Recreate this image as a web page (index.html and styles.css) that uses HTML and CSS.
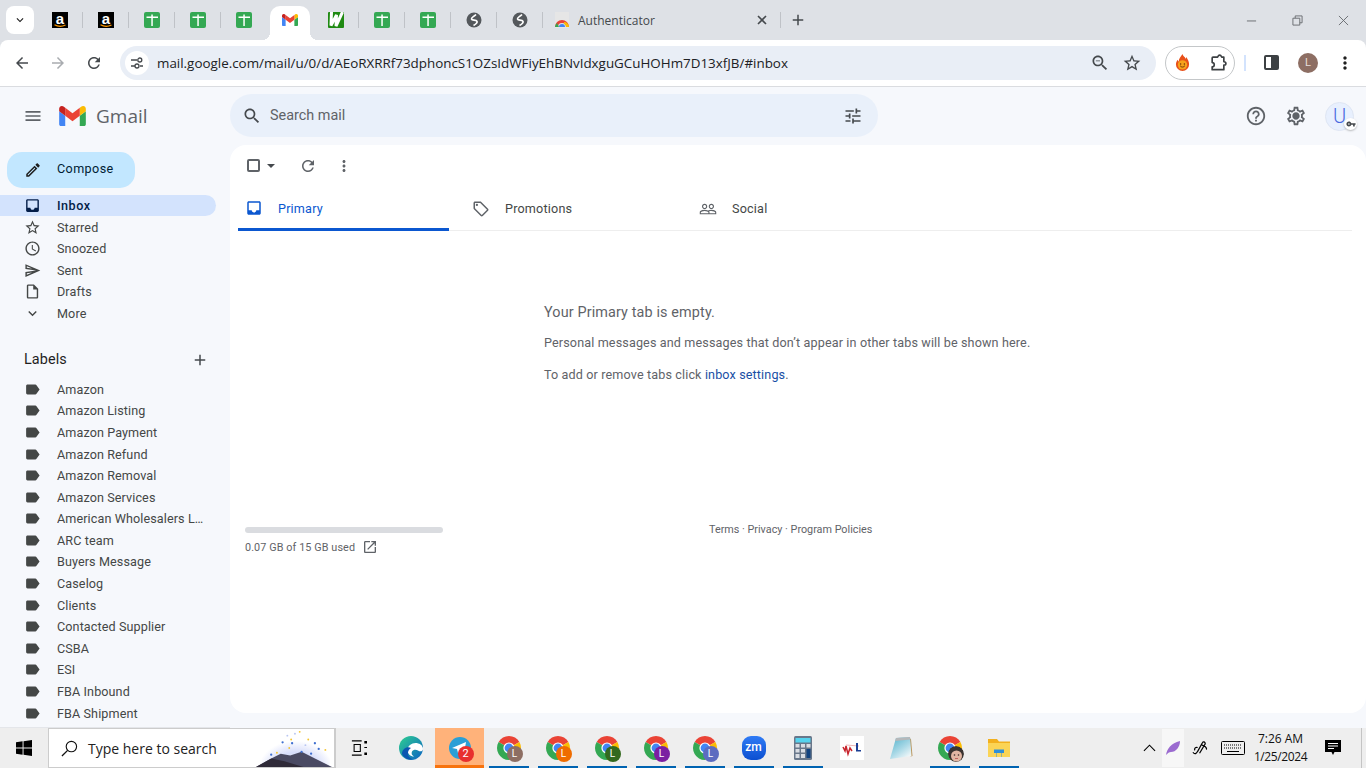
FILE: index.html
```html
<!DOCTYPE html>
<html lang="en">
<head>
    <meta charset="UTF-8">
    <title>Inbox - Gmail</title>
    <link rel="stylesheet" href="styles.css">
</head>
<body>
    <svg class="sprite" xmlns="http://www.w3.org/2000/svg">
        <symbol id="i-menu" viewBox="0 0 24 24"><path d="M3 18h18v-2H3v2zm0-5h18v-2H3v2zm0-7v2h18V6H3z"/></symbol>
        <symbol id="i-search" viewBox="0 0 24 24"><path d="M15.5 14h-.79l-.28-.27C15.41 12.59 16 11.11 16 9.5 16 5.91 13.09 3 9.5 3S3 5.91 3 9.5 5.91 16 9.5 16c1.61 0 3.09-.59 4.23-1.57l.27.28v.79l5 4.99L20.49 19l-4.99-5zm-6 0C7.01 14 5 11.99 5 9.5S7.01 5 9.5 5 14 7.01 14 9.5 11.99 14 9.5 14z"/></symbol>
        <symbol id="i-zoom" viewBox="0 0 24 24"><path d="M15.5 14h-.79l-.28-.27C15.41 12.59 16 11.11 16 9.5 16 5.91 13.09 3 9.5 3S3 5.91 3 9.5 5.91 16 9.5 16c1.61 0 3.09-.59 4.23-1.57l.27.28v.79l5 4.99L20.49 19l-4.99-5zm-6 0C7.01 14 5 11.99 5 9.5S7.01 5 9.5 5 14 7.01 14 9.5 11.99 14 9.5 14zM7 9h5v1H7z"/></symbol>
        <symbol id="i-tune" viewBox="0 0 24 24"><path d="M3 17v2h6v-2H3zM3 5v2h10V5H3zm10 16v-2h8v-2h-8v-2h-2v6h2zM7 9v2H3v2h4v2h2V9H7zm14 4v-2H11v2h10zm-6-4h2V7h4V5h-4V3h-2v6z"/></symbol>
        <symbol id="i-help" viewBox="0 0 24 24"><path d="M11 18h2v-2h-2v2zm1-16C6.48 2 2 6.48 2 12s4.48 10 10 10 10-4.48 10-10S17.52 2 12 2zm0 18c-4.41 0-8-3.59-8-8s3.59-8 8-8 8 3.59 8 8-3.59 8-8 8zm0-14c-2.21 0-4 1.79-4 4h2c0-1.1.9-2 2-2s2 .9 2 2c0 2-3 1.75-3 5h2c0-2.25 3-2.5 3-5 0-2.21-1.79-4-4-4z"/></symbol>
        <symbol id="i-gear" viewBox="0 0 24 24"><path d="M19.43 12.98c.04-.32.07-.64.07-.98 0-.34-.03-.66-.07-.98l2.11-1.65c.19-.15.24-.42.12-.64l-2-3.46c-.09-.16-.26-.25-.44-.25-.06 0-.12.01-.17.03l-2.49 1c-.52-.4-1.08-.73-1.69-.98l-.38-2.65C14.46 2.18 14.25 2 14 2h-4c-.25 0-.46.18-.49.42l-.38 2.65c-.61.25-1.17.59-1.69.98l-2.49-1c-.06-.02-.12-.03-.18-.03-.17 0-.34.09-.43.25l-2 3.46c-.13.22-.07.49.12.64l2.11 1.65c-.04.32-.07.65-.07.98 0 .33.03.66.07.98l-2.11 1.65c-.19.15-.24.42-.12.64l2 3.46c.09.16.26.25.44.25.06 0 .12-.01.17-.03l2.49-1c.52.4 1.08.73 1.69.98l.38 2.65c.03.24.24.42.49.42h4c.25 0 .46-.18.49-.42l.38-2.65c.61-.25 1.17-.59 1.69-.98l2.49 1c.06.02.12.03.18.03.17 0 .34-.09.43-.25l2-3.46c.12-.22.07-.49-.12-.64l-2.11-1.65zm-1.98-1.71c.04.31.05.52.05.73 0 .21-.02.43-.05.73l-.14 1.13.89.7 1.08.84-.7 1.21-1.27-.51-1.04-.42-.9.68c-.43.32-.84.56-1.25.73l-1.06.43-.16 1.13-.2 1.35h-1.4l-.19-1.35-.16-1.13-1.06-.43c-.43-.18-.83-.41-1.23-.71l-.91-.7-1.06.43-1.27.51-.7-1.21 1.08-.84.89-.7-.14-1.13c-.03-.31-.05-.54-.05-.74s.02-.43.05-.73l.14-1.13-.89-.7-1.08-.84.7-1.21 1.27.51 1.04.42.9-.68c.43-.32.84-.56 1.25-.73l1.06-.43.16-1.13.2-1.35h1.39l.19 1.35.16 1.13 1.06.43c.43.18.83.41 1.23.71l.91.7 1.06-.43 1.27-.51.7 1.21-1.07.85-.89.7.14 1.13zM12 8c-2.21 0-4 1.79-4 4s1.79 4 4 4 4-1.79 4-4-1.79-4-4-4z"/></symbol>
        <symbol id="i-edit" viewBox="0 0 24 24"><path d="M14.06 9.02l.92.92L5.92 19H5v-.92l9.06-9.06M17.66 3c-.25 0-.51.1-.7.29l-1.83 1.83 3.75 3.75 1.83-1.83c.39-.39.39-1.02 0-1.41l-2.34-2.34c-.2-.2-.45-.29-.71-.29zm-3.6 3.19L3 17.25V21h3.75L17.81 9.94l-3.75-3.75z"/></symbol>
        <symbol id="i-inbox" viewBox="0 0 24 24"><path d="M19 3H4.99c-1.11 0-1.98.89-1.98 2L3 19c0 1.1.88 2 1.99 2H19c1.1 0 2-.9 2-2V5c0-1.11-.9-2-2-2zm0 12h-4c0 1.66-1.35 3-3 3s-3-1.34-3-3H4.99V5H19v10z" fill-rule="evenodd"/></symbol>
        <symbol id="i-star" viewBox="0 0 24 24"><path d="M22 9.24l-7.19-.62L12 2 9.19 8.63 2 9.24l5.46 4.73L5.82 21 12 17.27 18.18 21l-1.63-7.03L22 9.24zM12 15.4l-3.76 2.27 1-4.28-3.32-2.88 4.38-.38L12 6.1l1.71 4.04 4.38.38-3.32 2.88 1 4.28L12 15.4z"/></symbol>
        <symbol id="i-clock" viewBox="0 0 24 24"><path d="M11.99 2C6.47 2 2 6.48 2 12s4.47 10 9.99 10C17.52 22 22 17.52 22 12S17.52 2 11.99 2zM12 20c-4.42 0-8-3.58-8-8s3.58-8 8-8 8 3.58 8 8-3.58 8-8 8zm.5-13H11v6l5.25 3.15.75-1.23-4.5-2.67z"/></symbol>
        <symbol id="i-send" viewBox="0 0 24 24"><path d="M4.01 6.03l7.51 3.22-7.52-1 .01-2.22m7.5 8.72L4 17.97v-2.22l7.51-1M2.01 3L2 10l15 2-15 2 .01 7L23 12 2.01 3z"/></symbol>
        <symbol id="i-draft" viewBox="0 0 24 24"><path d="M14 2H6c-1.1 0-1.99.9-1.99 2L4 20c0 1.1.89 2 1.99 2H18c1.1 0 2-.9 2-2V8l-6-6zM6 20V4h7v5h5v11H6z"/></symbol>
        <symbol id="i-more" viewBox="0 0 24 24"><path d="M16.59 8.59L12 13.17 7.41 8.59 6 10l6 6 6-6z"/></symbol>
        <symbol id="i-add" viewBox="0 0 24 24"><path d="M19 13h-6v6h-2v-6H5v-2h6V5h2v6h6v2z"/></symbol>
        <symbol id="i-label" viewBox="0 0 24 24"><path d="M17.63 5.84C17.27 5.33 16.67 5 16 5L5 5.01C3.9 5.01 3 5.9 3 7v10c0 1.1.9 1.99 2 1.99L16 19c.67 0 1.27-.33 1.63-.84L22 12l-4.37-6.16z"/></symbol>
        <symbol id="i-refresh" viewBox="0 0 24 24"><path d="M17.65 6.35C16.2 4.9 14.21 4 12 4c-4.42 0-7.99 3.58-7.99 8s3.57 8 7.99 8c3.73 0 6.84-2.55 7.73-6h-2.08c-.82 2.33-3.04 4-5.65 4-3.31 0-6-2.69-6-6s2.69-6 6-6c1.66 0 3.14.69 4.22 1.78L13 11h7V4l-2.35 2.35z"/></symbol>
        <symbol id="i-dots" viewBox="0 0 24 24"><path d="M12 8c1.1 0 2-.9 2-2s-.9-2-2-2-2 .9-2 2 .9 2 2 2zm0 2c-1.1 0-2 .9-2 2s.9 2 2 2 2-.9 2-2-.9-2-2-2zm0 6c-1.1 0-2 .9-2 2s.9 2 2 2 2-.9 2-2-.9-2-2-2z"/></symbol>
        <symbol id="i-tag" viewBox="0 0 24 24"><path d="M21.41 11.58l-9-9C12.05 2.22 11.55 2 11 2H4c-1.1 0-2 .9-2 2v7c0 .55.22 1.05.59 1.42l9 9c.36.36.86.58 1.41.58s1.05-.22 1.41-.59l7-7c.37-.36.59-.86.59-1.41s-.23-1.06-.59-1.42zM13 20.01L4 11V4h7v-.01l9 8.99-7 7.03z"/><circle cx="6.5" cy="6.5" r="1.5"/></symbol>
        <symbol id="i-people" viewBox="0 0 24 24"><path d="M16.5 13c-1.2 0-3.07.34-4.5 1-1.43-.67-3.3-1-4.5-1C5.33 13 1 14.08 1 16.25V19h22v-2.75c0-2.17-4.33-3.25-6.5-3.25zm-4 4.5h-10v-1.25c0-.54 2.56-1.75 5-1.75s5 1.21 5 1.75v1.25zm9 0H14v-1.25c0-.46-.2-.86-.52-1.22.88-.3 1.96-.53 3.02-.53 2.44 0 5 1.21 5 1.75v1.25zM7.5 12c1.93 0 3.5-1.57 3.5-3.5S9.43 5 7.5 5 4 6.57 4 8.5 5.57 12 7.5 12zm0-5.5c1.1 0 2 .9 2 2s-.9 2-2 2-2-.9-2-2 .9-2 2-2zm9 5.5c1.93 0 3.5-1.57 3.5-3.5S18.43 5 16.5 5 13 6.57 13 8.5s1.57 3.5 3.5 3.5zm0-5.5c1.1 0 2 .9 2 2s-.9 2-2 2-2-.9-2-2 .9-2 2-2z"/></symbol>
        <symbol id="i-open" viewBox="0 0 24 24"><path d="M19 19H5V5h7V3H5c-1.11 0-2 .9-2 2v14c0 1.1.89 2 2 2h14c1.1 0 2-.9 2-2v-7h-2v7zM14 3v2h3.59l-9.83 9.83 1.41 1.41L19 6.41V10h2V3h-7z"/></symbol>
        <symbol id="i-back" viewBox="0 0 24 24"><path d="M20 11H7.83l5.59-5.59L12 4l-8 8 8 8 1.41-1.41L7.83 13H20v-2z"/></symbol>
        <symbol id="i-forward" viewBox="0 0 24 24"><path d="M12 4l-1.41 1.41L16.17 11H4v2h12.17l-5.58 5.59L12 20l8-8z"/></symbol>
        <symbol id="i-key" viewBox="0 0 24 24"><path d="M12.65 10C11.83 7.67 9.61 6 7 6c-3.31 0-6 2.69-6 6s2.69 6 6 6c2.61 0 4.83-1.67 5.65-4H17v4h4v-4h2v-4H12.65zM7 14c-1.1 0-2-.9-2-2s.9-2 2-2 2 .9 2 2-.9 2-2 2z"/></symbol>
        <symbol id="i-globe" viewBox="0 0 16 16"><circle cx="8" cy="8" r="7.5" fill="#54585c"/><path d="M10 2.500C8 4.500 5 5.500 5.500 7c.6 1.800 4.500.4 5.500 2.300.7 1.600-1 2.700-3.500 4.200" fill="none" stroke="#fff" stroke-width="1.700"/></symbol>
        <symbol id="i-amazon" viewBox="0 0 16 16"><rect width="16" height="16" fill="#000"/><text x="8" y="11.500" font-family="Liberation Sans, sans-serif" font-weight="700" font-size="15" fill="#fff" text-anchor="middle">a</text><path d="M2.500 12.800c3.400 1.900 7.600 1.900 11 .2" fill="none" stroke="#f90" stroke-width="1.200"/></symbol>
        <symbol id="i-sheet" viewBox="0 0 16 16"><rect width="16" height="16" rx="2" fill="#34a853"/><path d="M7.300 2.500h1.500V4.600H14V6.100H8.800V14H7.300V6.100H2.500V4.600H7.300z" fill="#fff"/></symbol>
        <symbol id="i-gmail" viewBox="52 42 88 66">
            <path fill="#4285f4" d="M58 108h14V74L52 59v43c0 3.32 2.69 6 6 6"/>
            <path fill="#34a853" d="M120 108h14c3.32 0 6-2.69 6-6V59l-20 15"/>
            <path fill="#fbbc04" d="M120 48v26l20-15v-8c0-7.42-8.47-11.65-14.4-7.2"/>
            <path fill="#ea4335" d="M72 74V48l24 18 24-18v26L96 92"/>
            <path fill="#c5221f" d="M52 51v8l20 15V48l-5.6-4.2c-5.94-4.45-14.4-.22-14.4 7.2"/>
        </symbol>
        <symbol id="i-chrome" viewBox="0 0 24 24">
            <path fill="#ea4335" d="M12 12L1.61 6A12 12 0 0 1 22.39 6Z"/>
            <path fill="#fbbc04" d="M12 12L22.39 6A12 12 0 0 1 12 24Z"/>
            <path fill="#34a853" d="M12 12L12 24A12 12 0 0 1 1.61 6Z"/>
            <circle cx="12" cy="12" r="5.6" fill="#fff"/>
            <circle cx="12" cy="12" r="4.4" fill="#4285f4"/>
        </symbol>
    </svg>

    <div class="tabstrip">
        <button class="tab-search"><svg class="icon ic-14 black"><use href="#i-more"/></svg></button>
        <div class="tab"><svg class="favicon"><use href="#i-amazon"/></svg></div>
        <div class="tab"><svg class="favicon"><use href="#i-amazon"/></svg></div>
        <div class="tab"><svg class="favicon"><use href="#i-sheet"/></svg></div>
        <div class="tab"><svg class="favicon"><use href="#i-sheet"/></svg></div>
        <div class="tab no-sep"><svg class="favicon"><use href="#i-sheet"/></svg></div>
        <div class="tab active no-sep"><svg class="favicon-gmail"><use href="#i-gmail"/></svg></div>
        <div class="tab">
            <svg class="favicon" viewBox="0 0 16 16">
                <rect width="16" height="16" rx="1" fill="#1f8a12"/>
                <path d="M3.500 0L3 13.500 8.500 3l-.5 11L14.500 0" fill="none" stroke="#fff" stroke-width="3"/>
            </svg>
        </div>
        <div class="tab"><svg class="favicon"><use href="#i-sheet"/></svg></div>
        <div class="tab"><svg class="favicon"><use href="#i-sheet"/></svg></div>
        <div class="tab"><svg class="favicon"><use href="#i-globe"/></svg></div>
        <div class="tab"><svg class="favicon"><use href="#i-globe"/></svg></div>
        <div class="tab tab-wide">
            <svg class="favicon" viewBox="0 0 16 16">
                <rect x="1" y="0" width="14" height="16" fill="#e6e6e6"/>
                <path d="M1 15a7 7 0 0 1 14 0h-3a4 4 0 0 0-8 0z" fill="#ea4335"/>
                <path d="M10 10a5 5 0 0 1 5 5h-3a3 3 0 0 0-2-3z" fill="#fbbc04"/>
                <path d="M1 15a7 7 0 0 1 2-4l2 4z" fill="#34a853"/>
                <path d="M5 15a3 3 0 0 1 6 0z" fill="#4285f4"/>
            </svg>
            <span class="tab-title">Authenticator</span>
            <svg class="icon ic-16 dark tab-close" viewBox="0 0 16 16"><path d="M4 4l8 8M12 4l-8 8" stroke="#45494d" stroke-width="1.6" fill="none"/></svg>
        </div>
        <svg class="icon ic-18 dark new-tab"><use href="#i-add"/></svg>
        <div class="window-controls">
            <span class="win-btn"><svg class="win-glyph" viewBox="0 0 12 12"><path d="M1 6.500h10"/></svg></span>
            <span class="win-btn"><svg class="win-glyph" viewBox="0 0 12 12"><path d="M1 3.500h7.500v7.500H1zM3.500 3.500V1H11v7.500H8.500"/></svg></span>
            <span class="win-btn"><svg class="win-glyph" viewBox="0 0 12 12"><path d="M1 1l10 10M11 1L1 11"/></svg></span>
        </div>
    </div>

    <div class="toolbar">
        <svg class="icon ic-18 dark nav-btn"><use href="#i-back"/></svg>
        <svg class="icon ic-18 faded nav-btn"><use href="#i-forward"/></svg>
        <svg class="icon ic-18 dark nav-btn"><use href="#i-refresh"/></svg>
        <div class="omnibox">
            <span class="site-info">
                <svg class="icon ic-14" viewBox="0 0 14 14"><path d="M1 4h6M10 10h3M1 10h4" stroke="#45494d" stroke-width="1.300" fill="none"/><circle cx="9.800" cy="4" r="2" fill="none" stroke="#45494d" stroke-width="1.300"/><circle cx="7" cy="10" r="2" fill="none" stroke="#45494d" stroke-width="1.300"/></svg>
            </span>
            <span class="url">mail.google.com/mail/u/0/d/AEoRXRRf73dphoncS1OZsIdWFiyEhBNvIdxguGCuHOHm7D13xfJB/#inbox</span>
            <svg class="icon ic-20 dark"><use href="#i-zoom"/></svg>
            <svg class="icon ic-20 dark"><use href="#i-star"/></svg>
        </div>
        <div class="ext-pill">
            <svg class="ext-fire" viewBox="0 0 16 18">
                <path d="M8 0c1 3 3 3 3 5 1-1 1-2 1-2 2 3 3 5 3 8a7 7 0 0 1-14 0c0-2 1-4 2-5 0 1 1 2 1 2 0-3 2-5 4-8z" fill="#e8501a"/>
                <circle cx="8" cy="11.500" r="5" fill="#f7a21b"/>
                <path d="M5.500 12.500c1 1.800 4 1.800 5 0" stroke="#6b3208" fill="none"/>
                <circle cx="6" cy="10.500" r=".8" fill="#6b3208"/><circle cx="10" cy="10.500" r=".8" fill="#6b3208"/>
            </svg>
            <svg class="ext-puzzle" viewBox="0 0 24 24"><path d="M6 5h5.500c.5-1 .8-2.500 2.500-2.500S16 4 16.500 5H19v5.500c1.500 0 2.500 .8 2.500 2s-1 2-2.500 2V20H5v-3.500c1.500 0 2.500-.6 2.500-2.500S6.500 11.500 5 11.500V6a1 1 0 0 1 1-1z" fill="none" stroke="#3c4043" stroke-width="2" stroke-linejoin="round"/></svg>
        </div>
        <span class="toolbar-sep"></span>
        <span class="side-panel"><span class="side-panel-fill"></span></span>
        <span class="profile-dot">L</span>
        <svg class="icon ic-20 black"><use href="#i-dots"/></svg>
    </div>

    <div class="gmail">
        <header class="gmail-header">
            <div class="brand">
                <svg class="icon ic-20 grey brand-menu"><use href="#i-menu"/></svg>
                <svg class="gmail-logo"><use href="#i-gmail"/></svg>
                <span class="gmail-word">Gmail</span>
            </div>
            <div class="search-bar">
                <svg class="icon ic-20 dark"><use href="#i-search"/></svg>
                <span class="search-text">Search mail</span>
                <svg class="icon ic-20 dark"><use href="#i-tune"/></svg>
            </div>
            <div class="header-actions">
                <svg class="icon ic-22 grey"><use href="#i-help"/></svg>
                <svg class="icon ic-22 grey"><use href="#i-gear"/></svg>
                <div class="account">
                    <span>U</span>
                    <span class="key-badge"><svg class="icon ic-10 dark"><use href="#i-key"/></svg></span>
                </div>
            </div>
        </header>

        <aside class="sidebar">
            <button class="compose"><svg class="icon ic-18 black"><use href="#i-edit"/></svg><span class="compose-text">Compose</span></button>
            <ul class="nav-list">
                <li class="nav-row current"><svg class="icon"><use href="#i-inbox"/></svg>Inbox</li>
                <li class="nav-row"><svg class="icon"><use href="#i-star"/></svg>Starred</li>
                <li class="nav-row"><svg class="icon"><use href="#i-clock"/></svg>Snoozed</li>
                <li class="nav-row"><svg class="icon"><use href="#i-send"/></svg>Sent</li>
                <li class="nav-row"><svg class="icon"><use href="#i-draft"/></svg>Drafts</li>
                <li class="nav-row"><svg class="icon"><use href="#i-more"/></svg>More</li>
            </ul>
            <div class="labels-head">
                <span>Labels</span>
                <svg class="icon ic-18 dark"><use href="#i-add"/></svg>
            </div>
            <ul class="nav-list">
                <li class="nav-row"><svg class="icon"><use href="#i-label"/></svg>Amazon</li>
                <li class="nav-row"><svg class="icon"><use href="#i-label"/></svg>Amazon Listing</li>
                <li class="nav-row"><svg class="icon"><use href="#i-label"/></svg>Amazon Payment</li>
                <li class="nav-row"><svg class="icon"><use href="#i-label"/></svg>Amazon Refund</li>
                <li class="nav-row"><svg class="icon"><use href="#i-label"/></svg>Amazon Removal</li>
                <li class="nav-row"><svg class="icon"><use href="#i-label"/></svg>Amazon Services</li>
                <li class="nav-row"><svg class="icon"><use href="#i-label"/></svg><span class="clip">American Wholesalers LLC</span></li>
                <li class="nav-row"><svg class="icon"><use href="#i-label"/></svg>ARC team</li>
                <li class="nav-row"><svg class="icon"><use href="#i-label"/></svg>Buyers Message</li>
                <li class="nav-row"><svg class="icon"><use href="#i-label"/></svg>Caselog</li>
                <li class="nav-row"><svg class="icon"><use href="#i-label"/></svg>Clients</li>
                <li class="nav-row"><svg class="icon"><use href="#i-label"/></svg>Contacted Supplier</li>
                <li class="nav-row"><svg class="icon"><use href="#i-label"/></svg>CSBA</li>
                <li class="nav-row"><svg class="icon"><use href="#i-label"/></svg>ESI</li>
                <li class="nav-row"><svg class="icon"><use href="#i-label"/></svg>FBA Inbound</li>
                <li class="nav-row"><svg class="icon"><use href="#i-label"/></svg>FBA Shipment</li>
            </ul>
        </aside>

        <main class="mail-card">
            <div class="mail-actions">
                <span class="check-box"></span>
                <svg class="icon ic-14 dark caret" viewBox="0 0 14 14"><path d="M3 5l4 4 4-4z"/></svg>
                <svg class="icon ic-18 grey action-refresh"><use href="#i-refresh"/></svg>
                <svg class="icon ic-18 grey action-dots"><use href="#i-dots"/></svg>
            </div>
            <div class="mail-tabs">
                <div class="mail-tab selected"><svg class="icon ic-18 blue"><use href="#i-inbox"/></svg>Primary</div>
                <div class="mail-tab"><svg class="icon ic-18 grey"><use href="#i-tag"/></svg>Promotions</div>
                <div class="mail-tab"><svg class="icon ic-18 grey"><use href="#i-people"/></svg>Social</div>
            </div>
            <div class="empty-tab">
                <h2>Your Primary tab is empty.</h2>
                <p>Personal messages and messages that don’t appear in other tabs will be shown here.</p>
                <p>To add or remove tabs click <a href="#">inbox settings</a>.</p>
            </div>
            <div class="mail-footer">
                <div class="storage">
                    <div class="storage-bar"></div>
                    <div class="storage-text">0.07 GB of 15 GB used <svg class="icon ic-16 grey"><use href="#i-open"/></svg></div>
                </div>
                <div class="policies">Terms · Privacy · Program Policies</div>
            </div>
        </main>
    </div>

    <div class="taskbar">
        <span class="start">
            <svg class="start-logo" viewBox="0 0 17 17"><path d="M0 2.400l7-1V8H0zM8 1.300l9-1.300v8H8zM0 9h7v6.600l-7-1zM8 9h9v8l-9-1.300z" fill="#000"/></svg>
        </span>
        <div class="task-search">
            <svg class="search-lens" viewBox="0 0 18 18"><circle cx="11" cy="7" r="5.500" fill="none" stroke="#111" stroke-width="1.200"/><path d="M7 11l-6 6" stroke="#111" stroke-width="1.400"/></svg>
            <span class="task-search-text">Type here to search</span>
            <svg class="search-art" viewBox="0 0 80 40">
                <defs>
                    <radialGradient id="glow" cx="50%" cy="70%" r="55%"><stop offset="0" stop-color="#e7eed7"/><stop offset=".6" stop-color="#d6dcfb"/><stop offset="1" stop-color="#fff"/></radialGradient>
                </defs>
                <ellipse cx="42" cy="32" rx="36" ry="28" fill="url(#glow)"/>
                <path d="M0 40l16-9 10-5 10 2 12-4 12 6 20 10z" fill="#4a4a63"/>
                <path d="M0 40l16-9 14 3 20 6z" fill="#2f2a38"/>
                <g fill="#3f6fd0"><circle cx="16" cy="27" r="1.200"/><circle cx="28" cy="14" r="1.200"/><circle cx="38" cy="15" r="1.200"/><circle cx="48" cy="24" r="1.200"/><circle cx="62" cy="15" r="1.200"/><circle cx="66" cy="21" r="1.200"/><circle cx="58" cy="26" r="1.200"/></g>
                <g fill="#f4c430"><circle cx="22" cy="25" r="1"/><circle cx="35" cy="20" r="1"/><circle cx="37" cy="11" r="1"/><circle cx="55" cy="11" r="1"/><circle cx="73" cy="22" r="1"/><circle cx="46" cy="3" r="1"/></g>
                <g fill="#b9c6f2"><circle cx="33" cy="7" r="1"/><circle cx="41" cy="5" r="1"/><circle cx="52" cy="17" r="1"/></g>
            </svg>
        </div>
        <div class="task-item first-cell">
            <svg class="task-view" viewBox="0 0 18 18"><path d="M1 1h11M1 17h11M3.500 5h7v8h-7z" fill="none" stroke="#000" stroke-width="1.200"/><path d="M15 1h3v3h-3zM15 8h3v1h-3zM15 14h3v3h-3z"/></svg>
        </div>
        <div class="task-item edge-cell">
            <svg class="task-icon" viewBox="0 0 24 24">
                <defs><linearGradient id="edge" x1="0" y1="0" x2="1" y2="1"><stop offset="0" stop-color="#2ecf90"/><stop offset="1" stop-color="#0b62c4"/></linearGradient></defs>
                <circle cx="12" cy="12" r="12" fill="url(#edge)"/>
                <path d="M24 13c0-4-4-6-7.500-6-4 0-8 3-8 7 0 4 3 6.500 6.500 6.500-2-1-3-3-2-5s4-2.500 6-1 5 1 5-1.500z" fill="#fff"/>
                <path d="M12 12c-3-2-9 0-9 6 3 6 9 6 12 5-3 0-6-2-6-6 0-2 1-4 3-5z" fill="#0b57b0"/>
            </svg>
        </div>
        <div class="task-item hot">
            <span class="task-stack">
                <svg class="task-icon" viewBox="0 0 24 24"><circle cx="12" cy="12" r="11" fill="#2a9fd6"/><path d="M4 12l14-6-2 12-4-3-2 2-1-4z" fill="#fff"/></svg>
                <span class="count-badge">2</span>
            </span>
        </div>
        <div class="task-item running"><span class="task-stack"><svg class="task-icon"><use href="#i-chrome"/></svg><span class="profile-badge brown">L</span></span></div>
        <div class="task-item running"><span class="task-stack"><svg class="task-icon"><use href="#i-chrome"/></svg><span class="profile-badge orange">L</span></span></div>
        <div class="task-item running"><span class="task-stack"><svg class="task-icon"><use href="#i-chrome"/></svg><span class="profile-badge green">L</span></span></div>
        <div class="task-item running"><span class="task-stack"><svg class="task-icon"><use href="#i-chrome"/></svg><span class="profile-badge purple">L</span></span></div>
        <div class="task-item running"><span class="task-stack"><svg class="task-icon"><use href="#i-chrome"/></svg><span class="profile-badge indigo">L</span></span></div>
        <div class="task-item running"><span class="zoom-app">zm</span></div>
        <div class="task-item running">
            <svg class="task-icon" viewBox="0 0 18 24">
                <rect width="18" height="24" rx="1.500" fill="#68778a"/>
                <rect x="1.500" y="2" width="15" height="4.500" fill="#55d3ee"/>
                <path d="M1.500 8h4v3.500h-4zM7 8h4v3.500H7zM12.500 8h4v3.500h-4zM1.500 13h4v3.500h-4zM7 13h4v3.500H7zM1.500 18h4v4h-4zM7 18h4v4H7z" fill="#d9dde3"/>
                <rect x="12.500" y="13" width="4" height="9" fill="#11427f"/>
            </svg>
        </div>
        <div class="task-item">
            <span class="white-tile">
                <svg class="task-icon" viewBox="0 0 24 24"><path d="M3 11l2 4 1-5 2 8 2-6 2 3" fill="none" stroke="#c8242d" stroke-width="1.500"/><path d="M6 9l13 1" stroke="#e9a5a5" stroke-width=".8"/><path d="M16 7h2v7h3v1.500h-5z" fill="#1b3f94"/></svg>
            </span>
        </div>
        <div class="task-item">
            <svg class="task-icon" viewBox="0 0 24 24">
                <defs><linearGradient id="pad" x1="0" y1="0" x2=".7" y2="1"><stop offset="0" stop-color="#4fb0c9"/><stop offset=".6" stop-color="#a8d8e6"/><stop offset="1" stop-color="#eef6f8"/></linearGradient></defs>
                <path d="M20 2l2 1 1.500 17-2 .5z" fill="#b9955d"/>
                <path d="M7 2l14-1 1.500 19L1 23z" fill="url(#pad)"/>
                <path d="M7 2l14-1 .2 2.500L6.200 5z" fill="#b5b8ba"/>
            </svg>
        </div>
        <div class="task-item running">
            <span class="task-stack">
                <svg class="task-icon"><use href="#i-chrome"/></svg>
                <svg class="photo-badge" viewBox="0 0 16 16"><circle cx="8" cy="8" r="8" fill="#3a3431"/><ellipse cx="8.500" cy="10" rx="5.500" ry="5.500" fill="#e3b7a3"/><circle cx="6.500" cy="9" r=".8" fill="#3a2a25"/><circle cx="10.500" cy="9" r=".8" fill="#3a2a25"/><path d="M7 12.500h3" stroke="#c1655e"/></svg>
            </span>
        </div>
        <div class="task-item running">
            <svg class="task-icon" viewBox="0 0 24 24"><path d="M1 3h9l2 2.500h11V21H1z" fill="#f2b01e"/><path d="M1 7h22v14H1z" fill="#fbd455"/><path d="M7 17v-3.500h10V17h-2v4H9v-4z" fill="#2f8fd8"/><rect x="9.500" y="17" width="5" height="4" fill="#fbd455"/></svg>
        </div>
        <div class="tray">
            <span class="tray-item tray-chevron"><svg class="tray-svg" viewBox="0 0 14 8"><path d="M1 7l6-6 6 6" fill="none" stroke="#000" stroke-width="1.200"/></svg></span>
            <span class="tray-item tray-feather"><svg class="tray-svg feather" viewBox="0 0 16 16"><path d="M1 15C2 9 6 3 15 1c0 6-4 11-9 11-2 0-3 1-5 3z" fill="#9b6bd0"/></svg></span>
            <span class="tray-item tray-pen"><svg class="tray-svg pen" viewBox="0 0 18 18"><path d="M1 13c2 3 4 1 5-1l5-9c1-2 3-1 3 1l-6 10M6 8c-2-1-4 1-3 3M10 5l4 2c1 1 2 2 1 3" fill="none" stroke="#000" stroke-width="1.300"/></svg></span>
            <span class="tray-item tray-keys"><svg class="tray-svg keys" viewBox="0 0 24 14"><rect x=".5" y=".5" width="23" height="13" rx="1" fill="none" stroke="#000"/><path d="M3 4h18M3 7h18" stroke="#000" stroke-dasharray="1 1"/><path d="M6 10.500h12" stroke="#000"/></svg></span>
            <div class="clock"><span>7:26 AM</span><span class="clock-date">1/25/2024</span></div>
            <span class="tray-item tray-notes"><svg class="tray-svg notes" viewBox="0 0 16 16"><path d="M0 0h16v12H9.500L8 15l-1.500-3H0z"/><path d="M3 3.500h10M3 6h10M3 8.500h6" stroke="#fff"/></svg></span>
            <span class="show-desktop"></span>
        </div>
    </div>
</body>
</html>
```

FILE: styles.css
```css
* {
    box-sizing: border-box;
}
html, body {
    height: 100%;
}
body {
    margin: 0;
    display: flex;
    flex-direction: column;
    overflow: hidden;
    font-family: Roboto, "Liberation Sans", sans-serif;
    font-size: 12.6px;
    color: #444746;
    background-color: #dee1e6;
}
ul {
    list-style: none;
    margin: 0;
    padding: 0;
}
button {
    border: none;
    font: inherit;
    padding: 0;
}
.sprite {
    display: none;
}

/* Icons */
.icon {
    width: 17px;
    height: 17px;
    flex: none;
    fill: #444746;
}
.ic-10 { width: 10px; height: 10px; }
.ic-14 { width: 14px; height: 14px; }
.ic-16 { width: 16px; height: 16px; }
.ic-18 { width: 18px; height: 18px; }
.ic-20 { width: 20px; height: 20px; }
.ic-22 { width: 22px; height: 22px; }
.dark { fill: #45494d; }
.grey { fill: #5f6368; }
.black { fill: #1f1f1f; }
.faded { fill: #a9acb0; }
.blue { fill: #0b57d0; }

/* Browser tabs */
.tabstrip {
    height: 40px;
    flex: none;
    display: flex;
    align-items: stretch;
    background-color: #dee1e6;
}
.tab-search {
    width: 28px;
    height: 28px;
    margin: 6px 3px 0 6px;
    border-radius: 8px;
    background-color: #fff;
    display: flex;
    align-items: center;
    justify-content: center;
}
.tab {
    width: 46px;
    position: relative;
    display: flex;
    align-items: center;
    justify-content: center;
}
.tab::after {
    content: "";
    position: absolute;
    right: 0;
    top: 12px;
    height: 16px;
    border-right: 1px solid #bfc2c7;
}
.no-sep::after {
    display: none;
}
.tab.active {
    background-color: #fff;
    width: 40px;
    margin: 6px 3px 0;
    padding-bottom: 6px;
    border-radius: 10px 10px 0 0;
}
.tab.active::before,
.tab.active::after {
    content: "";
    display: block;
    position: absolute;
    bottom: 0;
    top: auto;
    width: 8px;
    height: 8px;
    border: none;
    background: radial-gradient(circle at 0 0, transparent 8px, #fff 8px);
}
.tab.active::before {
    left: -8px;
}
.tab.active::after {
    right: -8px;
    background: radial-gradient(circle at 100% 0, transparent 8px, #fff 8px);
}
.favicon {
    width: 16px;
    height: 16px;
}
.favicon-gmail {
    width: 16px;
    height: 12px;
}
.tab-wide {
    width: 238px;
    justify-content: flex-start;
    padding-left: 11px;
}
.tab-title {
    margin-left: 8px;
    flex: 1;
    font-family: "Open Sans", sans-serif;
    font-size: 12px;
    color: #45494d;
}
.tab-close {
    margin-right: 11px;
}
.new-tab {
    align-self: center;
    margin-left: 8px;
}
.window-controls {
    margin-left: auto;
    display: flex;
}
.win-btn {
    width: 46px;
    display: flex;
    align-items: center;
    justify-content: center;
}
.win-glyph {
    width: 11px;
    height: 11px;
    fill: none;
    stroke: #66696d;
    stroke-width: 1;
}

/* Address bar */
.toolbar {
    height: 47px;
    flex: none;
    display: flex;
    align-items: center;
    padding: 0 0 1px 13px;
    background-color: #fff;
    border-bottom: 1px solid #dadce0;
    border-radius: 8px 8px 0 0;
}
.nav-btn {
    margin-right: 18px;
}
.omnibox {
    width: 1036px;
    height: 34px;
    margin-left: -1px;
    display: flex;
    align-items: center;
    gap: 12px;
    padding: 0 14px 0 5px;
    border-radius: 17px;
    background-color: #e9eef6;
}
.site-info {
    width: 24px;
    height: 24px;
    flex: none;
    display: flex;
    align-items: center;
    justify-content: center;
    border-radius: 50%;
    background-color: #fff;
}
.url {
    flex: 1;
    margin-left: -4px;
    font-family: "Open Sans", sans-serif;
    font-size: 13.4px;
    color: #202124;
    white-space: nowrap;
}
.ext-pill {
    width: 70px;
    height: 34px;
    margin-left: 9px;
    display: flex;
    align-items: center;
    justify-content: space-between;
    padding: 0 6px 0 9px;
    border: 1px solid #c4c7c9;
    border-radius: 17px;
}
.ext-fire {
    width: 15px;
    height: 17px;
}
.ext-puzzle {
    width: 20px;
    height: 20px;
}
.toolbar-sep {
    width: 2px;
    height: 16px;
    margin-left: 9px;
    background-color: #d3e3fd;
}
.side-panel {
    width: 15px;
    height: 15px;
    margin-left: 18px;
    display: flex;
    justify-content: flex-end;
    border: 2px solid #3c4043;
    border-radius: 2px;
}
.side-panel-fill {
    width: 6px;
    background-color: #3c4043;
}
.profile-dot {
    width: 20px;
    height: 20px;
    margin: 0 17px 0 19px;
    border-radius: 50%;
    background-color: #8d6e63;
    color: #e8dfdb;
    font-size: 11px;
    line-height: 20px;
    text-align: center;
}

/* Gmail */
.gmail {
    flex: 1;
    min-height: 0;
    display: grid;
    grid-template-columns: 230px 1fr;
    grid-template-rows: 58px 1fr;
    background-color: #f6f8fc;
}
.gmail-header {
    grid-column: 1 / 3;
    display: flex;
    align-items: center;
}
.brand {
    width: 230px;
    display: flex;
    align-items: center;
    padding-left: 23px;
}
.gmail-logo {
    width: 27px;
    height: 20px;
    margin-left: 16px;
}
.gmail-word {
    margin-left: 10px;
    font-family: "Open Sans", sans-serif;
    font-size: 19px;
    color: #5f6368;
}
.search-bar {
    width: 648px;
    height: 43px;
    margin-bottom: 1px;
    display: flex;
    align-items: center;
    padding: 0 15px 0 12px;
    border-radius: 22px;
    background-color: #e9f0fa;
}
.search-text {
    flex: 1;
    margin-left: 8px;
    font-size: 14.4px;
    color: #5f6368;
}
.header-actions {
    margin-left: auto;
    display: flex;
    align-items: center;
    gap: 18px;
    padding-right: 12px;
}
.account {
    width: 29px;
    height: 29px;
    position: relative;
    border-radius: 50%;
    border: 1px solid #dfe6f3;
    background-color: #e8f0fe;
    color: #4a67e0;
    font-size: 20px;
    font-weight: 300;
    line-height: 26px;
    text-align: center;
}
.key-badge {
    position: absolute;
    right: -4px;
    bottom: 0;
    width: 13px;
    height: 12px;
    display: flex;
    align-items: center;
    justify-content: center;
    border-radius: 50%;
    background-color: #fff;
    box-shadow: 0 1px 2px rgba(0,0,0,0.25);
}

/* Sidebar */
.sidebar {
    padding-top: 7px;
    overflow: hidden;
    box-shadow: inset 0 -1px 0 #e4e6ea;
    letter-spacing: 0.1px;
}
.compose {
    width: 128px;
    height: 36px;
    margin: 0 0 6.8px 7px;
    display: flex;
    align-items: center;
    gap: 15px;
    padding-left: 17px;
    border-radius: 15px;
    background-color: #c2e7ff;
    color: #001d35;
    font-size: 12.6px;
}
.compose-text {
    padding-bottom: 3px;
    letter-spacing: 0.4px;
}
.nav-row {
    width: 216px;
    height: 21.6px;
    display: flex;
    align-items: center;
    gap: 16px;
    padding-left: 24px;
    padding-right: 12px;
    white-space: nowrap;
}
.current {
    background-color: #d3e3fd;
    border-radius: 0 11px 11px 0;
    color: #041e49;
    font-weight: 500;
    letter-spacing: 0.5px;
}
.current .icon {
    fill: #041e49;
}
.clip {
    overflow: hidden;
    text-overflow: ellipsis;
}
.labels-head {
    width: 216px;
    height: 30px;
    margin: 20.4px 0 3.7px;
    display: flex;
    align-items: center;
    justify-content: space-between;
    padding: 0 7px 0 24px;
    font-size: 14.4px;
    color: #1f1f1f;
}

/* Mail card */
.mail-card {
    margin-bottom: 15px;
    display: flex;
    flex-direction: column;
    border-radius: 16px;
    background-color: #fff;
}
.mail-actions {
    height: 43px;
    display: flex;
    align-items: center;
    padding: 0 0 2px 17px;
}
.check-box {
    width: 13px;
    height: 13px;
    border: 2px solid #5f6368;
    border-radius: 2px;
}
.caret {
    margin-left: 4px;
}
.action-refresh {
    margin-left: 21px;
}
.action-dots {
    margin-left: 18px;
}
.mail-tabs {
    height: 43px;
    margin: 0 14px 0 8px;
    display: grid;
    grid-template-columns: 211px 227px 1fr;
    border-bottom: 1px solid #eeeeee;
}
.mail-tab {
    display: flex;
    align-items: center;
    gap: 15px;
    height: 43px;
    padding-left: 7px;
    padding-bottom: 2px;
    letter-spacing: 0.2px;
    color: #444746;
}
.mail-tab:nth-child(2) {
    padding-left: 23px;
}
.mail-tab:nth-child(3) {
    padding-left: 23px;
}
.selected {
    color: #0b57d0;
    padding-bottom: 0;
    border-bottom: 3px solid #0b57d0;
    border-radius: 3px 3px 0 0;
}
.empty-tab {
    margin: 72px 0 0 314px;
    height: 200px;
    color: #5f6368;
    letter-spacing: 0.13px;
}
.empty-tab h2 {
    margin: 0 0 12px;
    height: 20px;
    font-size: 14.4px;
    font-weight: 400;
    line-height: 20px;
}
.empty-tab p {
    margin: 0 0 16px;
    height: 16px;
    line-height: 16px;
}
.empty-tab a {
    color: #1a4fa5;
    text-decoration: none;
}
.mail-footer {
    display: flex;
    align-items: flex-start;
    padding: 0 0 0 15px;
    margin-top: 24px;
    font-size: 10.8px;
    color: #5f6368;
}
.storage {
    width: 198px;
}
.storage-bar {
    height: 6px;
    margin-bottom: 6px;
    border-radius: 3px;
    background-color: #dadce0;
}
.storage-text {
    display: flex;
    align-items: center;
    gap: 7px;
    letter-spacing: 0.1px;
    white-space: nowrap;
}
.policies {
    margin: -4px 0 0 266px;
    white-space: nowrap;
}

/* Windows taskbar */
.taskbar {
    height: 40px;
    flex: none;
    display: flex;
    background-color: #eeeeee;
    color: #111;
}
.start {
    width: 48px;
    display: flex;
    align-items: center;
    justify-content: center;
}
.start-logo {
    width: 16px;
    height: 16px;
}
.task-search {
    width: 288px;
    display: flex;
    align-items: center;
    padding-left: 12px;
    border: 1px solid #cccccc;
    border-width: 1px 2px 1px 1px;
    background-color: #fff;
    overflow: hidden;
}
.search-lens {
    width: 17px;
    height: 17px;
    flex: none;
}
.task-search-text {
    flex: 1;
    margin-left: 10px;
    font-family: "Open Sans", sans-serif;
    font-size: 14px;
    color: #222;
}
.search-art {
    width: 80px;
    height: 38px;
    flex: none;
}
.task-item {
    width: 49px;
    position: relative;
    display: flex;
    align-items: center;
    justify-content: center;
}
.first-cell {
    width: 46px;
}
.task-view {
    width: 16px;
    height: 16px;
}
.edge-cell {
    margin-left: 4px;
}
.hot {
    background-color: #ffb27a;
    border-bottom: 3px solid #f7730e;
    padding-top: 3px;
}
.running::after {
    content: "";
    position: absolute;
    left: 5px;
    right: 4px;
    bottom: 0;
    height: 2px;
    background-color: #0063b1;
}
.task-icon {
    width: 24px;
    height: 24px;
    display: block;
}
.task-stack {
    position: relative;
    display: block;
}
.count-badge,
.profile-badge,
.photo-badge {
    position: absolute;
    left: 10px;
    top: 10px;
    width: 16px;
    height: 16px;
    border-radius: 50%;
    color: #fff;
    font-size: 10px;
    line-height: 16px;
    text-align: center;
}
.count-badge {
    background-color: #e8302e;
    font-size: 11px;
}
.brown { background-color: #8d6e63; }
.orange { background-color: #ef6c00; }
.green { background-color: #33691e; }
.purple { background-color: #7b1fa2; }
.indigo { background-color: #5c6bc0; }
.zoom-app {
    width: 24px;
    height: 24px;
    border-radius: 9px;
    background: linear-gradient(#2f7bf5, #0b4fd0);
    color: #fff;
    font-size: 12px;
    font-weight: 500;
    line-height: 23px;
    text-align: center;
}
.white-tile {
    background-color: #fff;
}
.tray {
    margin-left: auto;
    display: flex;
    align-items: stretch;
}
.tray-item {
    display: flex;
    align-items: center;
    justify-content: center;
}
.tray-svg {
    width: 13px;
    height: 8px;
}
.tray-chevron { width: 25px; }
.tray-feather {
    width: 22px;
    margin: 1px 0;
    background-color: #f7f7f7;
}
.tray-pen { width: 33px; }
.tray-keys { width: 32px; }
.tray-notes { width: 42px; }
.feather {
    width: 16px;
    height: 16px;
}
.pen {
    width: 17px;
    height: 17px;
}
.keys {
    width: 24px;
    height: 14px;
}
.notes {
    width: 16px;
    height: 16px;
}
.clock {
    width: 63px;
    display: flex;
    flex-direction: column;
    align-items: center;
    justify-content: center;
    gap: 2px;
    font-family: "Open Sans", sans-serif;
    font-size: 12px;
    line-height: 16px;
}
.clock-date {
    letter-spacing: -0.4px;
}
.show-desktop {
    width: 5px;
    margin-left: 7px;
    border-left: 1px solid #c4c4c4;
}
```
